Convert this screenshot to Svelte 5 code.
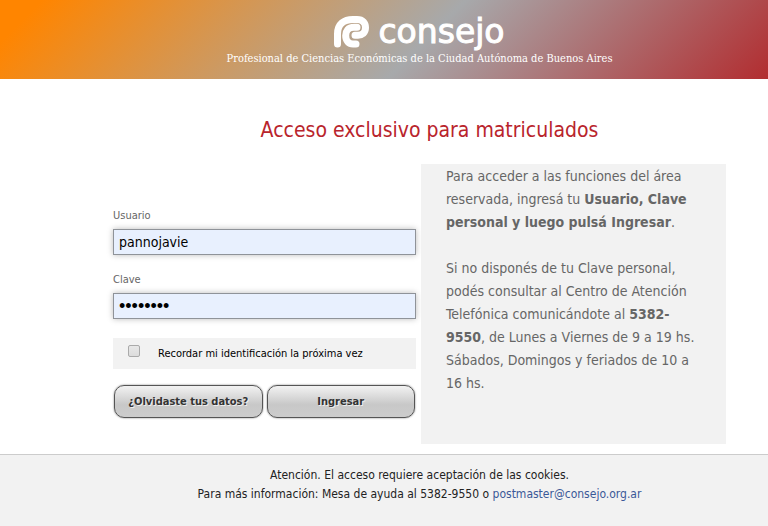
<script>
  let user = "pannojavie";
  let password = "password";
  let remember = false;
</script>

<style>
  :global(body) {
    margin: 0;
    background: #fff;
  }

  .page {
    --gutter: 71px;
    --panel: #f2f2f2;

    font-family: "DejaVu Sans Condensed", Tahoma, Verdana, sans-serif;
    color: #666;
  }

  header {
    display: flex;
    flex-direction: column;
    align-items: center;
    padding: 12px 0 12px var(--gutter);
    color: #fff;
    background: linear-gradient(135deg, #ff8500 5%, #a7a9ab 55%, #b22d30 100%);
  }

  .logo {
    display: flex;
    align-items: center;
    gap: 8px;
    height: 39px;
  }

  .logo svg {
    width: 36px;
    height: 32px;
  }

  .wordmark {
    font: 33px/39px "DejaVu Sans", sans-serif;
    -webkit-text-stroke: 1px #fff;
  }

  .tagline {
    margin: 0;
    font: 11px/16px "DejaVu Serif Condensed", "DejaVu Serif", serif;
  }

  main {
    padding: 37px 42px 10px 113px;
  }

  h1 {
    margin: 0 0 20px;
    padding-left: 20px;
    font-size: 21px;
    line-height: 28px;
    font-weight: normal;
    text-align: center;
    color: #b9242c;
  }

  .columns {
    display: grid;
    grid-template-columns: 303fr 305fr;
    gap: 5px;
  }

  form {
    display: flex;
    flex-direction: column;
    padding-top: 43px;
  }

  .field {
    display: flex;
    flex-direction: column;
    margin-bottom: 16px;
    font-size: 11px;
    line-height: 18px;
  }

  .field input {
    box-sizing: border-box;
    height: 26px;
    margin-top: 4px;
    padding: 0 5px;
    border: 1px solid #8f9399;
    border-radius: 0;
    background: #e8f0fe;
    box-shadow: 0 0 6px #bbb;
    font: inherit;
    font-size: 14px;
    color: #000;
    outline: none;
  }

  .field input[type="password"] {
    font: 18px "Liberation Sans", Arial, sans-serif;
  }

  .remember {
    display: flex;
    align-items: center;
    height: 31px;
    margin: 3px 0 16px;
    padding-left: 15px;
    gap: 18px;
    background: var(--panel);
    font-size: 11px;
    color: #000;
  }

  .remember input {
    appearance: none;
    box-sizing: border-box;
    width: 12px;
    height: 12px;
    margin: 0 0 5px;
    border: 1px solid #aaa;
    border-radius: 2px;
    background: linear-gradient(#e8e8e8, #dcdcdc);
  }

  .remember input:checked {
    background: #666;
  }

  .buttons {
    display: flex;
    gap: 4px;
    padding: 0 1px;
  }

  button {
    flex: 1;
    height: 33px;
    padding: 0;
    border: 1px solid #555;
    border-radius: 10px;
    background: linear-gradient(#f2f2f2, #c8c8c8 60%, #ccc);
    box-shadow: 0 0 2px #777;
    font: inherit;
    font-size: 11px;
    font-weight: bold;
    color: #333;
    text-shadow: 1px 1px 0 #eee;
  }

  aside {
    padding: 1px 25px 49px;
    background: var(--panel);
    font-size: 14px;
    line-height: 23px;
  }

  aside p {
    margin: 0 0 23px;
  }

  aside p:last-child {
    margin: 0;
  }

  footer {
    min-height: 60px;
    padding: 11px 0 0 var(--gutter);
    border-top: 1px solid #ccc;
    background: var(--panel);
    font-size: 12px;
    line-height: 19px;
    text-align: center;
    color: #222;
  }

  footer p {
    margin: 0;
  }

  footer a {
    color: #3b5998;
    text-decoration: none;
  }
</style>

<div class="page">
  <header>
    <div class="logo">
      <svg viewBox="0 0 36 32" fill="none" stroke="#fff" stroke-width="7" stroke-linecap="round" aria-hidden="true">
        <path d="M3.5 28V18C3.5 8 10 3.5 19 3.5H23C29 3.5 31.5 7 31.5 11.5C31.5 17 28 19.3 24 19.3H21" />
        <path d="M23 11.3H20C14 11.3 11.7 15 11.7 19.5C11.7 25 15 28 19 28H22" />
      </svg>
      <span class="wordmark">consejo</span>
    </div>
    <p class="tagline">Profesional de Ciencias Económicas de la Ciudad Autónoma de Buenos Aires</p>
  </header>

  <main>
    <h1>Acceso exclusivo para matriculados</h1>
    <div class="columns">
      <form on:submit|preventDefault>
        <div class="field">
          <label for="user">Usuario</label>
          <input id="user" type="text" bind:value={user} />
        </div>
        <div class="field">
          <label for="password">Clave</label>
          <input id="password" type="password" bind:value={password} />
        </div>
        <div class="remember">
          <input id="remember" type="checkbox" bind:checked={remember} />
          <label for="remember">Recordar mi identificación la próxima vez</label>
        </div>
        <div class="buttons">
          <button type="button">¿Olvidaste tus datos?</button>
          <button type="submit">Ingresar</button>
        </div>
      </form>

      <aside>
        <p>
          Para acceder a las funciones del área reservada, ingresá tu
          <b>Usuario, Clave personal y luego pulsá Ingresar</b>.
        </p>
        <p>
          Si no disponés de tu Clave personal, podés consultar al Centro de
          Atención Telefónica comunicándote al <b>5382-9550</b>, de Lunes a
          Viernes de 9 a 19 hs. Sábados, Domingos y feriados de 10 a 16 hs.
        </p>
      </aside>
    </div>
  </main>

  <footer>
    <p>Atención. El acceso requiere aceptación de las cookies.</p>
    <p>
      Para más información: Mesa de ayuda al 5382-9550 o
      <a href="mailto:postmaster@consejo.org.ar">postmaster@consejo.org.ar</a>
    </p>
  </footer>
</div>
